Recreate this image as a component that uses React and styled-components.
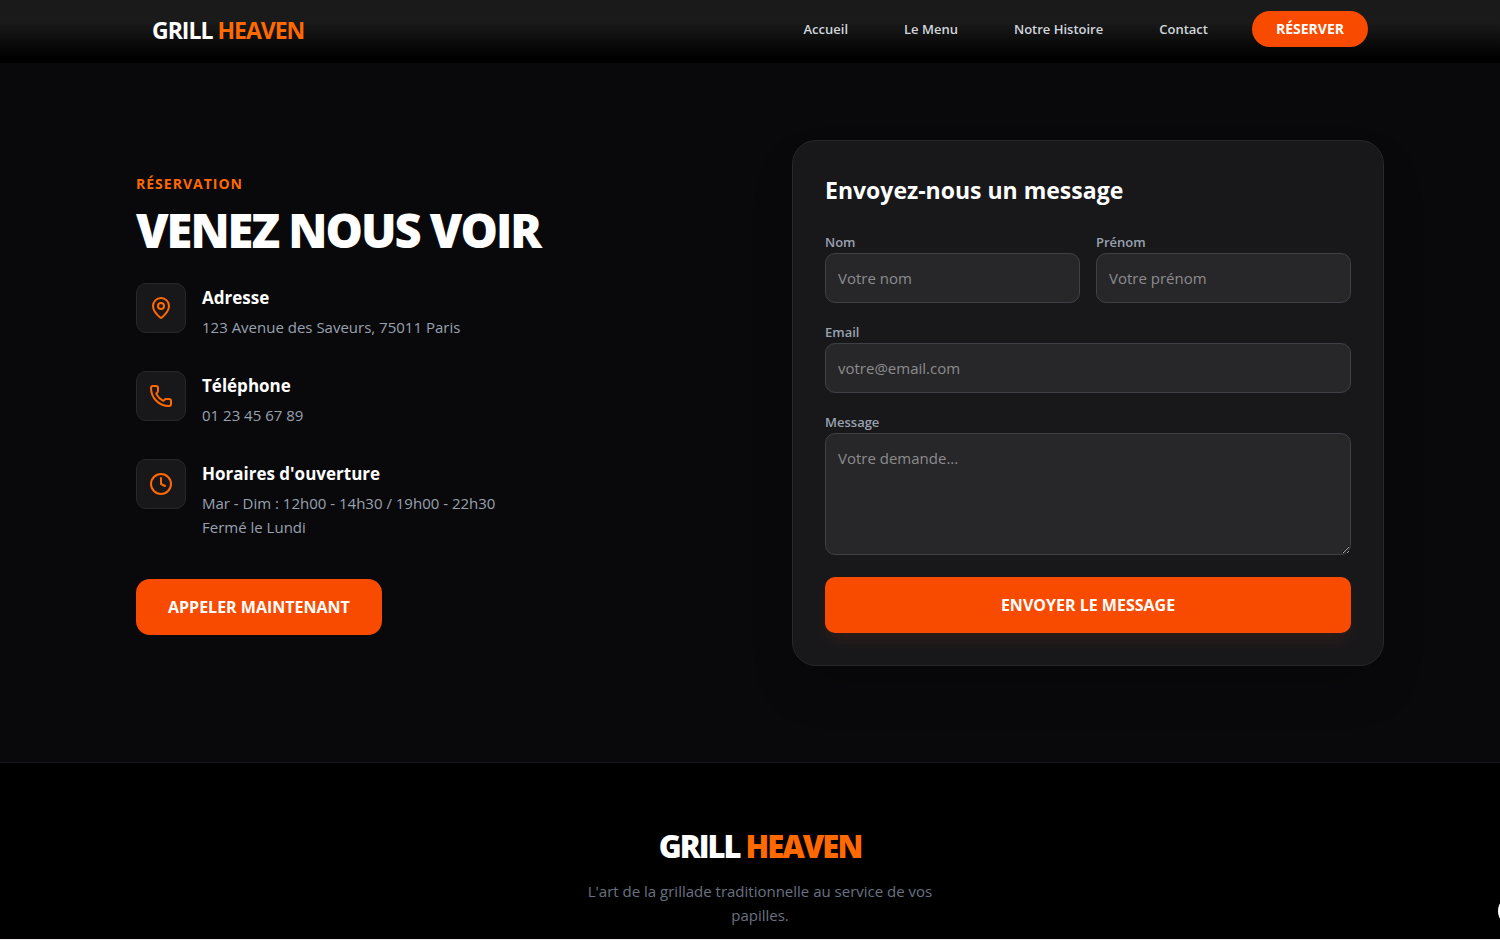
import React from 'react';
import styled, { createGlobalStyle } from 'styled-components';
import { MapPin, Phone, Clock } from 'lucide-react';

const infos = [
  { icon: MapPin, title: 'Adresse', lines: ['123 Avenue des Saveurs, 75011 Paris'] },
  { icon: Phone, title: 'Téléphone', lines: ['01 23 45 67 89'] },
  {
    icon: Clock,
    title: "Horaires d'ouverture",
    lines: ['Mar - Dim : 12h00 - 14h30 / 19h00 - 22h30', 'Fermé le Lundi'],
  },
];

const App = () => {
  return (
    <Page>
      <GlobalStyle />
      <Header>
        <HeaderInner>
          <Logo href="#accueil">
            GRILL <Accent>HEAVEN</Accent>
          </Logo>
          <Nav>
            <NavLink href="#accueil">Accueil</NavLink>
            <NavLink href="#menu">Le Menu</NavLink>
            <NavLink href="#histoire">Notre Histoire</NavLink>
            <NavLink href="#contact">Contact</NavLink>
            <ReserveButton type="button">RÉSERVER</ReserveButton>
          </Nav>
        </HeaderInner>
      </Header>

      <Contact id="contact">
        <ContactGrid>
          <div>
            <Eyebrow>RÉSERVATION</Eyebrow>
            <Title>VENEZ NOUS VOIR</Title>
            <InfoList>
              {infos.map(({ icon: Icon, title, lines }) => (
                <InfoItem key={title}>
                  <IconBox>
                    <Icon size={24} aria-hidden="true" />
                  </IconBox>
                  <div>
                    <InfoTitle>{title}</InfoTitle>
                    {lines.map((line) => (
                      <InfoText key={line}>{line}</InfoText>
                    ))}
                  </div>
                </InfoItem>
              ))}
            </InfoList>
            <CallButton type="button">APPELER MAINTENANT</CallButton>
          </div>

          <Card>
            <CardTitle>Envoyez-nous un message</CardTitle>
            <Form onSubmit={(e) => e.preventDefault()}>
              <FieldRow>
                <Field>
                  <Label htmlFor="nom">Nom</Label>
                  <Input id="nom" type="text" placeholder="Votre nom" />
                </Field>
                <Field>
                  <Label htmlFor="prenom">Prénom</Label>
                  <Input id="prenom" type="text" placeholder="Votre prénom" />
                </Field>
              </FieldRow>
              <Field>
                <Label htmlFor="email">Email</Label>
                <Input id="email" type="email" placeholder="votre@email.com" />
              </Field>
              <Field>
                <Label htmlFor="message">Message</Label>
                <TextArea id="message" rows={4} placeholder="Votre demande..." />
              </Field>
              <SubmitButton type="submit">ENVOYER LE MESSAGE</SubmitButton>
            </Form>
          </Card>
        </ContactGrid>
      </Contact>

      <Footer>
        <FooterLogo>
          GRILL <Accent>HEAVEN</Accent>
        </FooterLogo>
        <FooterText>L'art de la grillade traditionnelle au service de vos papilles.</FooterText>
      </Footer>
      <FloatingDot />
    </Page>
  );
};

export default App;

// Styles

const GlobalStyle = createGlobalStyle`
  *, *::before, *::after {
    box-sizing: border-box;
  }

  body {
    margin: 0;
    background: #000;
    color: #fff;
    font-family: 'Open Sans', 'Noto Sans', sans-serif;
    font-size: 15px;
    line-height: 24px;
  }

  h1, h2, h3, p {
    margin: 0;
  }

  button, input, textarea {
    font: inherit;
  }
`;

const Page = styled.div`
  display: flex;
  flex-direction: column;
  height: 100vh;
  overflow: hidden;
  border-bottom: 1px solid #f3eef0;
`;

const Header = styled.header`
  flex-shrink: 0;
  padding-left: 20px;
  background: linear-gradient(to bottom, #1a1a1a 0, #1a1a1a 22px, #000 58px);
`;

const HeaderInner = styled.div`
  display: flex;
  align-items: center;
  justify-content: space-between;
  max-width: 1280px;
  margin: 0 auto;
  padding: 11px 32px 16px;
`;

const Logo = styled.a`
  padding-top: 2px;
  color: #fff;
  font-size: 23px;
  font-weight: 700;
  letter-spacing: -1px;
  line-height: 32px;
  text-decoration: none;
`;

const Accent = styled.span`
  color: #ff6900;
`;

const Nav = styled.nav`
  display: flex;
  align-items: center;
  gap: 56px;
`;

const NavLink = styled.a`
  color: #d1d5dc;
  font-size: 13px;
  font-weight: 600;
  line-height: 20px;
  text-decoration: none;
`;

const Button = styled.button`
  border: 0;
  background: #f84b00;
  color: #fff;
  font-size: 16px;
  font-weight: 700;
  line-height: 24px;
  cursor: pointer;
`;

const ReserveButton = styled(Button)`
  margin-left: -12px;
  padding: 8px 24px;
  border-radius: 18px;
  font-size: 14px;
  line-height: 20px;
`;

const Contact = styled.main`
  flex-shrink: 0;
  padding: 77px 0 96px 20px;
  background: #09090b;
`;

const ContactGrid = styled.div`
  display: grid;
  grid-template-columns: 1fr 1fr;
  align-items: center;
  gap: 64px;
  max-width: 1280px;
  margin: 0 auto;
  padding: 0 16px;
`;

const Eyebrow = styled.h2`
  color: #ff6900;
  font-size: 14px;
  font-weight: 700;
  letter-spacing: 1px;
  line-height: 24px;
`;

const Title = styled.h1`
  margin: 10px 0 29px;
  font-size: 47px;
  font-weight: 800;
  letter-spacing: -2px;
  line-height: 48px;
`;

const InfoList = styled.div`
  display: flex;
  flex-direction: column;
  gap: 32px;
`;

const InfoItem = styled.div`
  display: flex;
  align-items: flex-start;
  gap: 16px;
`;

const IconBox = styled.div`
  padding: 12px;
  border: 1px solid #27272a;
  border-radius: 10px;
  background: #18181b;
  color: #ff6900;

  svg {
    display: block;
  }
`;

const InfoTitle = styled.h3`
  margin-bottom: 2px;
  font-size: 17px;
  font-weight: 700;
  line-height: 30px;
`;

const InfoText = styled.p`
  color: #99a1af;
`;

const CallButton = styled(Button)`
  margin-top: 40px;
  padding: 16px 32px;
  border-radius: 14px;
`;

const Card = styled.section`
  padding: 32px;
  border: 1px solid #27272a;
  border-radius: 24px;
  background: #18181b;
  box-shadow: 0 25px 50px -12px rgba(0, 0, 0, 0.25);
`;

const CardTitle = styled.h3`
  margin-bottom: 22px;
  font-size: 23px;
  font-weight: 700;
  line-height: 34px;
`;

const Form = styled.form`
  display: flex;
  flex-direction: column;
  gap: 16px;
`;

const FieldRow = styled.div`
  display: grid;
  grid-template-columns: 1fr 1fr;
  gap: 16px;
`;

const Field = styled.div`
  display: flex;
  flex-direction: column;
`;

const Label = styled.label`
  padding-top: 2px;
  color: #99a1af;
  font-size: 13px;
  font-weight: 600;
  line-height: 22px;
`;

const Input = styled.input`
  width: 100%;
  padding: 12px;
  border: 1px solid #3f3f46;
  border-radius: 10px;
  background: #27272a;
  color: #fff;
  outline: none;

  &::placeholder {
    color: #8c8c8d;
    opacity: 1;
  }
`;

const TextArea = styled(Input).attrs({ as: 'textarea' })`
  display: block;
  resize: vertical;
`;

const SubmitButton = styled(Button)`
  margin-top: 6px;
  padding: 16px;
  border-radius: 10px;
  box-shadow: 0 10px 15px -3px rgba(248, 75, 0, 0.1);
`;

const Footer = styled.footer`
  flex: 1 0 auto;
  padding: 64px 0 48px 20px;
  border-top: 1px solid #18181b;
  background: #000;
  text-align: center;
`;

const FooterLogo = styled.div`
  margin-bottom: 14px;
  font-size: 31px;
  font-weight: 800;
  letter-spacing: -2px;
  line-height: 38px;
`;

const FooterText = styled.p`
  max-width: 384px;
  margin: 0 auto;
  color: #6a7282;
`;

/* round bubble tucked behind the right edge of the window */
const FloatingDot = styled.div`
  position: fixed;
  right: -30px;
  bottom: 13px;
  width: 32px;
  height: 32px;
  border-radius: 50%;
  background: #fff;
`;
